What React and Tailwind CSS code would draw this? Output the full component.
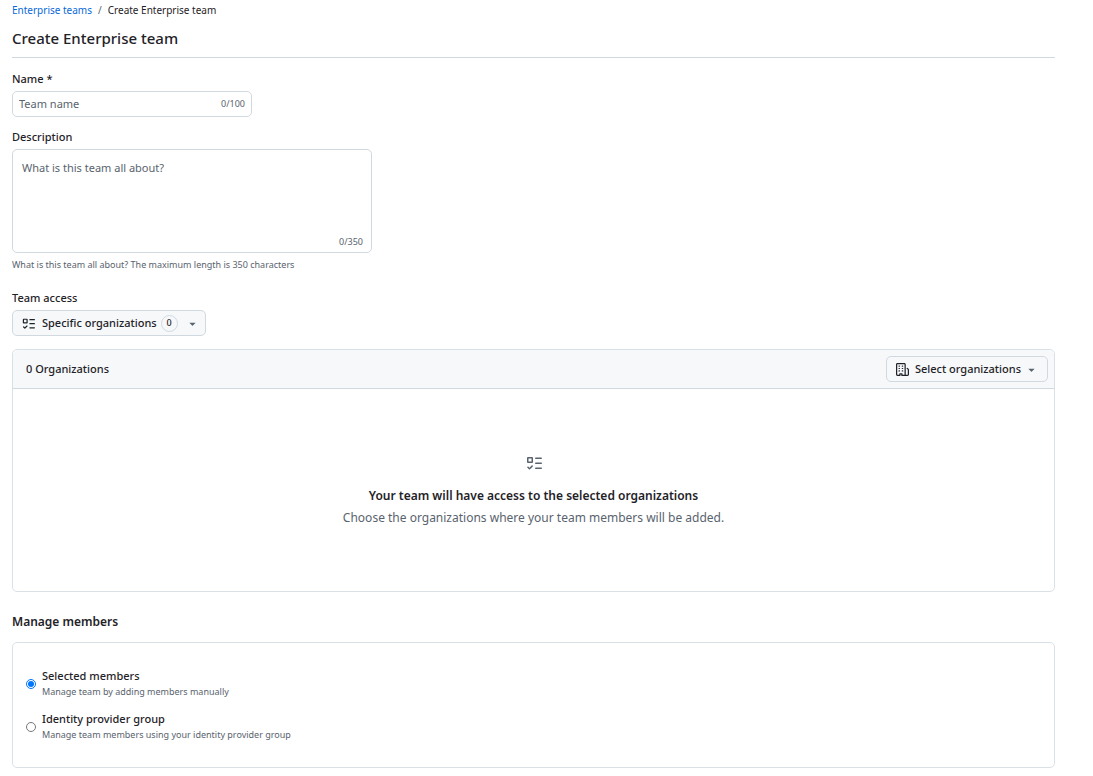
import React, { useState } from "react";

const TasklistIcon = ({ className }) => (
  <svg className={className} viewBox="0 0 16 16" fill="currentColor" aria-hidden="true">
    <path d="M2 2h4a1 1 0 0 1 1 1v4a1 1 0 0 1-1 1H2a1 1 0 0 1-1-1V3a1 1 0 0 1 1-1Zm4.655 8.595a.75.75 0 0 1 0 1.06L4.03 14.28a.75.75 0 0 1-1.06 0l-1.5-1.5a.749.749 0 0 1 .326-1.275.749.749 0 0 1 .734.215l.97.97 2.095-2.095a.75.75 0 0 1 1.06 0ZM9.75 2.5h5.5a.75.75 0 0 1 0 1.5h-5.5a.75.75 0 0 1 0-1.5Zm0 5h5.5a.75.75 0 0 1 0 1.5h-5.5a.75.75 0 0 1 0-1.5Zm0 5h5.5a.75.75 0 0 1 0 1.5h-5.5a.75.75 0 0 1 0-1.5Zm-7.25-9v3h3v-3Z" />
  </svg>
);

const OrganizationIcon = ({ className }) => (
  <svg className={className} viewBox="0 0 16 16" fill="currentColor" aria-hidden="true">
    <path d="M1.75 16A1.75 1.75 0 0 1 0 14.25V1.75C0 .784.784 0 1.75 0h8.5C11.216 0 12 .784 12 1.75v12.5c0 .085-.006.168-.018.25h2.268a.25.25 0 0 0 .25-.25V8.285a.25.25 0 0 0-.111-.208l-1.055-.703a.749.749 0 1 1 .832-1.248l1.055.703c.487.325.779.871.779 1.456v5.965A1.75 1.75 0 0 1 14.25 16h-3.5a.766.766 0 0 1-.197-.026c-.099.017-.2.026-.303.026h-3a.75.75 0 0 1-.75-.75V14h-1v1.25a.75.75 0 0 1-.75.75Zm-.25-1.75c0 .138.112.25.25.25H4v-1.25a.75.75 0 0 1 .75-.75h2.5a.75.75 0 0 1 .75.75v1.25h2.25a.25.25 0 0 0 .25-.25V1.75a.25.25 0 0 0-.25-.25h-8.5a.25.25 0 0 0-.25.25ZM3.75 6h.5a.75.75 0 0 1 0 1.5h-.5a.75.75 0 0 1 0-1.5ZM3 3.75A.75.75 0 0 1 3.75 3h.5a.75.75 0 0 1 0 1.5h-.5A.75.75 0 0 1 3 3.75Zm4 3A.75.75 0 0 1 7.75 6h.5a.75.75 0 0 1 0 1.5h-.5A.75.75 0 0 1 7 6.75ZM7.75 3h.5a.75.75 0 0 1 0 1.5h-.5a.75.75 0 0 1 0-1.5ZM3 9.75A.75.75 0 0 1 3.75 9h.5a.75.75 0 0 1 0 1.5h-.5A.75.75 0 0 1 3 9.75ZM7.75 9h.5a.75.75 0 0 1 0 1.5h-.5a.75.75 0 0 1 0-1.5Z" />
  </svg>
);

const TriangleDownIcon = ({ className }) => (
  <svg className={className} viewBox="0 0 16 16" fill="currentColor" aria-hidden="true">
    <path d="m4.427 7.427 3.396 3.396a.25.25 0 0 0 .354 0l3.396-3.396A.25.25 0 0 0 11.396 7H4.604a.25.25 0 0 0-.177.427Z" />
  </svg>
);

const memberOptions = [
  {
    id: "selected",
    title: "Selected members",
    description: "Manage team by adding members manually",
  },
  {
    id: "idp",
    title: "Identity provider group",
    description: "Manage team members using your identity provider group",
  },
];

export default function App() {
  const [name, setName] = useState("");
  const [description, setDescription] = useState("");
  const [source, setSource] = useState("selected");

  return (
    <main className="pl-3 pr-[38px] pt-0.5 pb-2 bg-white text-[#1f2328] text-[11px] leading-4 font-['Noto_Sans',sans-serif]">
      <nav aria-label="Breadcrumb" className="flex gap-1.5 text-[10px]">
        <a href="#teams" className="text-[#0969da]">
          Enterprise teams
        </a>
        <span className="text-[#59636e]">/</span>
        <span>Create Enterprise team</span>
      </nav>

      <h1 className="mt-2 pb-[7px] border-b border-[#d1d9e0] text-[15px] leading-6 font-medium">
        Create Enterprise team
      </h1>

      <form>
        <label htmlFor="name" className="block mt-[13px] font-medium">
          Name *
        </label>
        <div className="mt-1 flex items-center w-60 h-[26px] px-1.5 rounded-[5px] border border-[#d1d9e0]">
          <input
            id="name"
            type="text"
            maxLength={100}
            value={name}
            onChange={(e) => setName(e.target.value)}
            placeholder="Team name"
            className="grow min-w-0 outline-none placeholder:text-[#59636e]"
          />
          <span className="text-[9px] text-[#59636e]">{name.length}/100</span>
        </div>

        <label htmlFor="description" className="block mt-3 font-medium">
          Description
        </label>
        <div className="mt-1 flex flex-col w-[360px] h-[104px] rounded-[5px] border border-[#d1d9e0]">
          <textarea
            id="description"
            maxLength={350}
            value={description}
            onChange={(e) => setDescription(e.target.value)}
            placeholder="What is this team all about?"
            className="grow px-[9px] pt-2.5 resize-none outline-none placeholder:text-[#59636e]"
          />
          <span className="px-2 pb-0.5 text-right text-[9px] text-[#59636e]">
            {description.length}/350
          </span>
        </div>
        <p className="mt-1 text-[9px] text-[#59636e]">
          What is this team all about? The maximum length is 350 characters
        </p>

        <div id="access" className="mt-[17px] font-medium">
          Team access
        </div>
        <button
          type="button"
          aria-haspopup="menu"
          className="mt-1 flex items-center h-[26px] pl-[9px] pr-1.5 rounded-[5px] border border-[#d1d9e0] bg-[#f6f8fa] font-medium"
        >
          <TasklistIcon className="size-[13px] mr-[7px]" />
          Specific organizations
          <span className="ml-1 size-[17px] flex items-center justify-center rounded-full border border-[#d1d9e0] text-[9px]">
            0
          </span>
          <TriangleDownIcon className="ml-2 size-[13px] text-[#59636e]" />
        </button>

        <section className="mt-[13px] rounded-[5px] border border-[#d1d9e0]/80">
          <div className="flex items-center justify-between h-[39px] pl-[13px] pr-1.5 rounded-t-[5px] border-b border-[#d1d9e0] bg-[#f6f8fa]">
            <h2 className="font-medium">0 Organizations</h2>
            <button
              type="button"
              aria-haspopup="menu"
              className="flex items-center h-[26px] px-[9px] rounded-[5px] border border-[#d1d9e0] bg-[#f6f8fa] font-medium"
            >
              <OrganizationIcon className="size-[13px] mr-1.5" />
              Select organizations
              <TriangleDownIcon className="ml-1 size-[13px] text-[#59636e]" />
            </button>
          </div>
          <div className="flex flex-col items-center pt-[66px] pb-[62px] text-center">
            <TasklistIcon className="size-4 text-[#59636e]" />
            <h3 className="mt-3.5 text-xs leading-[22px] font-semibold">
              Your team will have access to the selected organizations
            </h3>
            <p className="text-xs leading-[22px] text-[#59636e]">
              Choose the organizations where your team members will be added.
            </p>
          </div>
        </section>

        <h2 id="members" className="mt-5 text-xs leading-5 font-semibold">
          Manage members
        </h2>
        <div
          role="radiogroup"
          aria-labelledby="members"
          className="mt-2.5 px-[13px] pt-[25px] pb-6 flex flex-col gap-[11px] rounded-[5px] border border-[#d1d9e0]/80"
        >
          {memberOptions.map((option) => (
            <label key={option.id} className="flex items-center gap-1.5">
              <input
                type="radio"
                name="members"
                checked={source === option.id}
                onChange={() => setSource(option.id)}
                className="size-2.5"
              />
              <span>
                <span className="block font-medium">{option.title}</span>
                <span className="block text-[9px] text-[#59636e]">
                  {option.description}
                </span>
              </span>
            </label>
          ))}
        </div>
      </form>
    </main>
  );
}
